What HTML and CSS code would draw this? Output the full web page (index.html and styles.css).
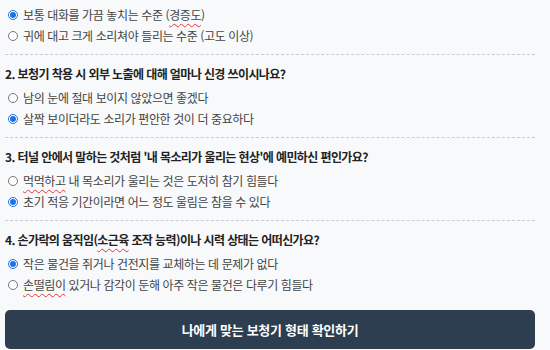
FILE: index.html
```html
<!DOCTYPE html>
<html lang="ko">
    <head>
        <meta charset="UTF-8" />
        <title>보청기 형태 자가진단</title>
        <link rel="stylesheet" href="styles.css">
    </head>

    <body>
        <div class="wrap">
            <!-- 1번 문항 (위쪽은 스크롤됨) -->
            <div class="qbox first">
                <label class="opt">
                    <input type="radio" name="q1" checked />
                    <span>보통 대화를 가끔 놓치는 수준 (<span class="typo">경증도</span>)</span>
                </label>
                <label class="opt">
                    <input type="radio" name="q1" />
                    <span>귀에 대고 크게 소리쳐야 들리는 수준 (고도 이상)</span>
                </label>
            </div>

            <div class="qbox">
                <h3>2. 보청기 착용 시 외부 노출에 대해 얼마나 신경 쓰이시나요?</h3>
                <label class="opt">
                    <input type="radio" name="q2" />
                    <span>남의 눈에 절대 보이지 않았으면 좋겠다</span>
                </label>
                <label class="opt">
                    <input type="radio" name="q2" checked />
                    <span>살짝 보이더라도 소리가 편안한 것이 더 중요하다</span>
                </label>
            </div>

            <div class="qbox">
                <h3>3. 터널 안에서 말하는 것처럼 '내 목소리가 울리는 현상'에 예민하신 편인가요?</h3>
                <label class="opt">
                    <input type="radio" name="q3" />
                    <span><span class="typo">먹먹하고</span> 내 목소리가 울리는 것은 도저히 참기 힘들다</span>
                </label>
                <label class="opt">
                    <input type="radio" name="q3" checked />
                    <span>초기 적응 기간이라면 어느 정도 울림은 참을 수 있다</span>
                </label>
            </div>

            <div class="qbox last">
                <h3>4. 손가락의 움직임(<span class="typo">소근육</span> 조작 능력)이나 시력 상태는 어떠신가요?</h3>
                <label class="opt">
                    <input type="radio" name="q4" checked />
                    <span>작은 물건을 쥐거나 건전지를 교체하는 데 문제가 없다</span>
                </label>
                <label class="opt">
                    <input type="radio" name="q4" />
                    <span><span class="typo">손떨림이</span> 있거나 감각이 둔해 아주 작은 물건은 다루기 힘들다</span>
                </label>
            </div>

            <button class="btn">나에게 맞는 보청기 형태 확인하기</button>
        </div>
    </body>
</html>
```

FILE: styles.css
```css
body {
    margin: 0;
    background: #f8f9fb;
    font-family: "Noto Sans CJK KR", "Noto Sans", sans-serif;
    color: #444;
}

.wrap {
    width: 530px;
    padding: 0 5px;
}

/* 문항 박스 */
.qbox {
    padding: 10px 0 8px;
    border-bottom: 1px dashed #ccc;
}
.qbox.first {
    padding-top: 4px;
}
.qbox.last {
    border-bottom: 0;
    padding-bottom: 0;
}

.qbox h3 {
    margin: 0 0 4px;
    font-size: 12px;
    line-height: 18px;
    font-weight: bold;
    letter-spacing: -0.6px;
    color: #222;
}

/* 라디오 선택지 */
.opt {
    display: flex;
    align-items: center;
    height: 21px;
    padding-left: 3px;
    font-size: 12px;
    letter-spacing: -0.4px;
}
.opt input {
    width: 10px;
    height: 10px;
    margin: 1px 5px 0 0;
    accent-color: #1a73e8;
}

/* 맞춤법 밑줄 */
.typo {
    text-decoration: underline wavy #e53935;
    text-decoration-thickness: 1px;
    text-underline-offset: 3px;
}

.btn {
    display: block;
    width: 100%;
    height: 39px;
    margin-top: 15px;
    border: 0;
    border-radius: 5px;
    background: #2c3e50;
    color: #fff;
    font-family: inherit;
    font-size: 13px;
    font-weight: bold;
    letter-spacing: -0.3px;
}
```
